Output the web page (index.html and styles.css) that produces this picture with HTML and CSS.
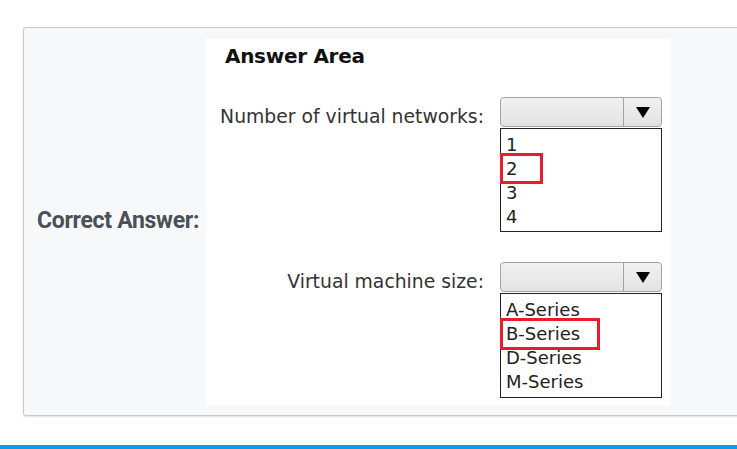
FILE: index.html
```html
<!DOCTYPE html>
<html>
<head>
<meta charset="utf-8">
<link rel="stylesheet" href="styles.css">
</head>
<body>
<div class="page">
  <div class="card">
    <div class="label-cell">Correct Answer:</div>
    <div class="answer">
      <div class="answer-title">Answer Area</div>
      <div class="form">
        <div class="field-label">Number of virtual networks:</div>
        <div class="control">
          <div class="select"><span class="select-value"></span><span class="select-btn"><span class="arrow"></span></span></div>
          <ul class="list list-num">
            <li>1</li>
            <li class="picked">2<span class="hl hl-num"></span></li>
            <li>3</li>
            <li>4</li>
          </ul>
        </div>
        <div class="field-label">Virtual machine size:</div>
        <div class="control">
          <div class="select"><span class="select-value"></span><span class="select-btn"><span class="arrow"></span></span></div>
          <ul class="list list-series">
            <li>A-Series</li>
            <li class="picked">B-Series<span class="hl hl-series"></span></li>
            <li>D-Series</li>
            <li>M-Series</li>
          </ul>
        </div>
      </div>
    </div>
  </div>
</div>
<div class="rule"></div>
</body>
</html>
```
FILE: styles.css
```css
html, body {
  margin: 0;
  padding: 0;
  overflow: hidden;
  background: #ffffff;
}
.page {
  padding: 27px 0 0 23px;
}
.card {
  display: flex;
  align-items: center;
  margin-right: -12px;
  background: #f7f8fa;
  border: 1px solid #c9c9c9;
  border-radius: 3px;
  box-shadow: 0 1px 2px rgba(0,0,0,0.12);
  padding: 11px 0 9px 0;
}
.label-cell {
  width: 169px;
  padding-left: 13px;
  padding-bottom: 4px;
  font-family: Roboto, "Liberation Sans", sans-serif;
  font-weight: 700;
  font-size: 23px;
  color: #4a4f58;
  white-space: nowrap;
  letter-spacing: -0.3px;
}
.answer {
  width: 465px;
  background: #ffffff;
  padding: 6px 0 8px 0;
  font-family: "DejaVu Sans", Verdana, sans-serif;
}
.answer-title {
  padding-left: 19px;
  font-weight: 700;
  font-size: 20px;
  line-height: 22px;
  color: #111;
  letter-spacing: -0.3px;
}
.form {
  margin-top: 30px;
  display: grid;
  grid-template-columns: 278px 162px;
  column-gap: 16px;
  row-gap: 30px;
}
.field-label {
  text-align: right;
  font-size: 18.8px;
  line-height: 30px;
  padding-top: 5px;
  color: #333;
  white-space: nowrap;
}
.control {
  display: flex;
  flex-direction: column;
}
.select {
  display: flex;
  height: 28px;
  border: 1px solid #a3a3a3;
  border-radius: 4px;
  background: linear-gradient(#f1f1f1, #e3e3e3);
  box-sizing: content-box;
}
.select-value {
  flex: 1;
}
.select-btn {
  width: 37px;
  border-left: 1px solid #a3a3a3;
  display: flex;
  align-items: center;
  justify-content: center;
}
.arrow {
  width: 0;
  height: 0;
  border-left: 7px solid transparent;
  border-right: 7px solid transparent;
  border-top: 11px solid #000;
  margin-top: 1px;
}
.list {
  list-style: none;
  margin: 1px 0 0 0;
  padding: 4px 0 2px 0;
  border: 1.5px solid #222;
  background: #fff;
  font-size: 18px;
  color: #222;
}
.list-series {
  padding-top: 4px;
  padding-bottom: 3px;
}
.list li {
  position: relative;
  line-height: 24px;
  padding-left: 5px;
}
.hl {
  position: absolute;
  left: -1.5px;
  top: -4px;
  height: 25px;
  border: 3px solid #e2202b;
}
.hl-num {
  width: 37px;
}
.hl-series {
  width: 94px;
  height: 26px;
}
.rule {
  margin-top: 29px;
  height: 4px;
  background: #0e9be2;
}
```
